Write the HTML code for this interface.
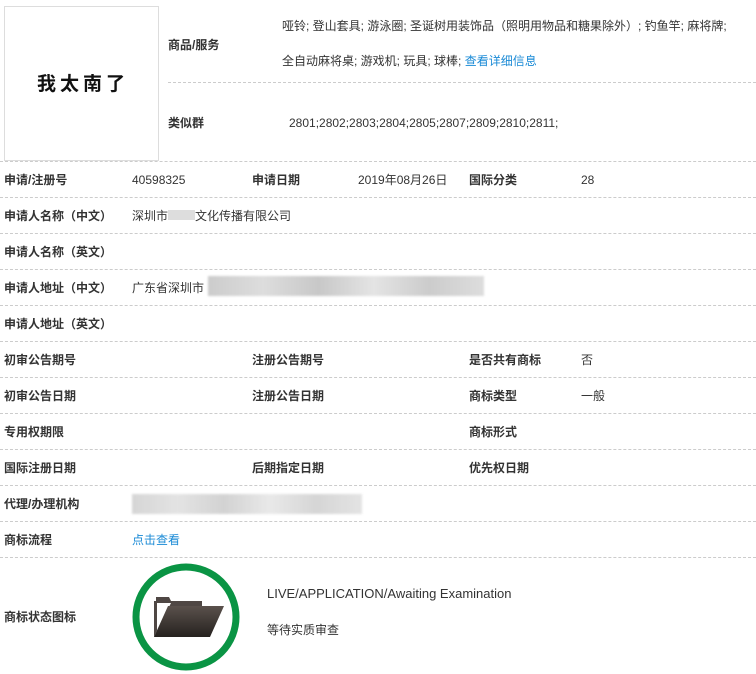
<!DOCTYPE html>
<html><head><meta charset="utf-8"><style>
body{margin:0;width:756px;height:674px;background:#fff;position:relative;overflow:hidden;font-family:"Liberation Sans","Noto Sans CJK SC",sans-serif;font-size:12px;color:#333}
.a{position:absolute;white-space:nowrap;line-height:14px}
.b{font-weight:bold}
.h{position:absolute;height:0;border-top:1px dashed #ccc}
.bl{position:absolute;background:linear-gradient(90deg,#ccc,#ddd,#c8c8c8,#e4e4e4,#ccc,#ddd);filter:blur(1px)}
</style></head><body>
<div style="position:absolute;left:4px;top:6px;width:153px;height:153px;border:1px solid #ddd"></div>
<div class="a b" style="left:37px;top:75px;font-size:19px;line-height:20px;color:#111;letter-spacing:4px">我太南了</div>
<div class="a b" style="left:168px;top:38px">商品/服务</div>
<div class="a" style="left:282px;top:19px">哑铃; 登山套具; 游泳圈; 圣诞树用装饰品（照明用物品和糖果除外）; 钓鱼竿; 麻将牌;</div>
<div class="a" style="left:282px;top:54px">全自动麻将桌; 游戏机; 玩具; 球棒; <span style="color:#1a8ad6">查看详细信息</span></div>
<div class="h" style="left:168px;top:82px;width:588px"></div>
<div class="a b" style="left:168px;top:116px">类似群</div>
<div class="a" style="left:289px;top:116px">2801;2802;2803;2804;2805;2807;2809;2810;2811;</div>
<div class="h" style="left:0;top:161px;width:756px"></div>
<div class="a b" style="left:4px;top:173px">申请/注册号</div><div class="a" style="left:132px;top:173px">40598325</div>
<div class="a b" style="left:252px;top:173px">申请日期</div><div class="a" style="left:358px;top:173px">2019年08月26日</div>
<div class="a b" style="left:469px;top:173px">国际分类</div><div class="a" style="left:581px;top:173px">28</div>
<div class="h" style="left:0;top:197px;width:756px"></div>
<div class="a b" style="left:4px;top:209px">申请人名称（中文）</div><div class="a" style="left:132px;top:209px">深圳市<span style="display:inline-block;width:27px;height:10px;background:#ddd"></span>文化传播有限公司</div>
<div class="h" style="left:0;top:233px;width:756px"></div>
<div class="a b" style="left:4px;top:245px">申请人名称（英文）</div>
<div class="h" style="left:0;top:269px;width:756px"></div>
<div class="a b" style="left:4px;top:281px">申请人地址（中文）</div><div class="a" style="left:132px;top:281px">广东省深圳市</div>
<div class="bl" style="left:208px;top:276px;width:276px;height:20px"></div>
<div class="h" style="left:0;top:305px;width:756px"></div>
<div class="a b" style="left:4px;top:317px">申请人地址（英文）</div>
<div class="h" style="left:0;top:341px;width:756px"></div>
<div class="a b" style="left:4px;top:353px">初审公告期号</div><div class="a b" style="left:252px;top:353px">注册公告期号</div><div class="a b" style="left:469px;top:353px">是否共有商标</div><div class="a" style="left:581px;top:353px">否</div>
<div class="h" style="left:0;top:377px;width:756px"></div>
<div class="a b" style="left:4px;top:389px">初审公告日期</div><div class="a b" style="left:252px;top:389px">注册公告日期</div><div class="a b" style="left:469px;top:389px">商标类型</div><div class="a" style="left:581px;top:389px">一般</div>
<div class="h" style="left:0;top:413px;width:756px"></div>
<div class="a b" style="left:4px;top:425px">专用权期限</div><div class="a b" style="left:469px;top:425px">商标形式</div>
<div class="h" style="left:0;top:449px;width:756px"></div>
<div class="a b" style="left:4px;top:461px">国际注册日期</div><div class="a b" style="left:252px;top:461px">后期指定日期</div><div class="a b" style="left:469px;top:461px">优先权日期</div>
<div class="h" style="left:0;top:485px;width:756px"></div>
<div class="a b" style="left:4px;top:497px">代理/办理机构</div>
<div class="bl" style="left:132px;top:494px;width:230px;height:20px;opacity:.8"></div>
<div class="h" style="left:0;top:521px;width:756px"></div>
<div class="a b" style="left:4px;top:533px">商标流程</div><div class="a" style="left:132px;top:533px;color:#1a8ad6">点击查看</div>
<div class="h" style="left:0;top:557px;width:756px"></div>
<div class="a b" style="left:4px;top:610px">商标状态图标</div>
<svg style="position:absolute;left:132px;top:563px" width="110" height="110" viewBox="0 0 110 110">
<defs><linearGradient id="g" x1="0" y1="0" x2="0" y2="1"><stop offset="0" stop-color="#5a514c"/><stop offset="1" stop-color="#26221f"/></linearGradient></defs>
<circle cx="54" cy="54" r="50" fill="none" stroke="#0a9444" stroke-width="7"/>
<path d="M22 74 V38 h2 v-4 h13 l2 4 h31 v5 H36 Z" fill="#4f4744"/>
<path d="M25 40 h14 l-14 28 Z" fill="#fff"/>
<path d="M22 74 l14 -31 h56 l-14 31 Z" fill="url(#g)"/>
</svg>
<div class="a" style="left:267px;top:587px;font-size:13px">LIVE/APPLICATION/Awaiting Examination</div>
<div class="a" style="left:267px;top:623px">等待实质审查</div>
</body></html>
